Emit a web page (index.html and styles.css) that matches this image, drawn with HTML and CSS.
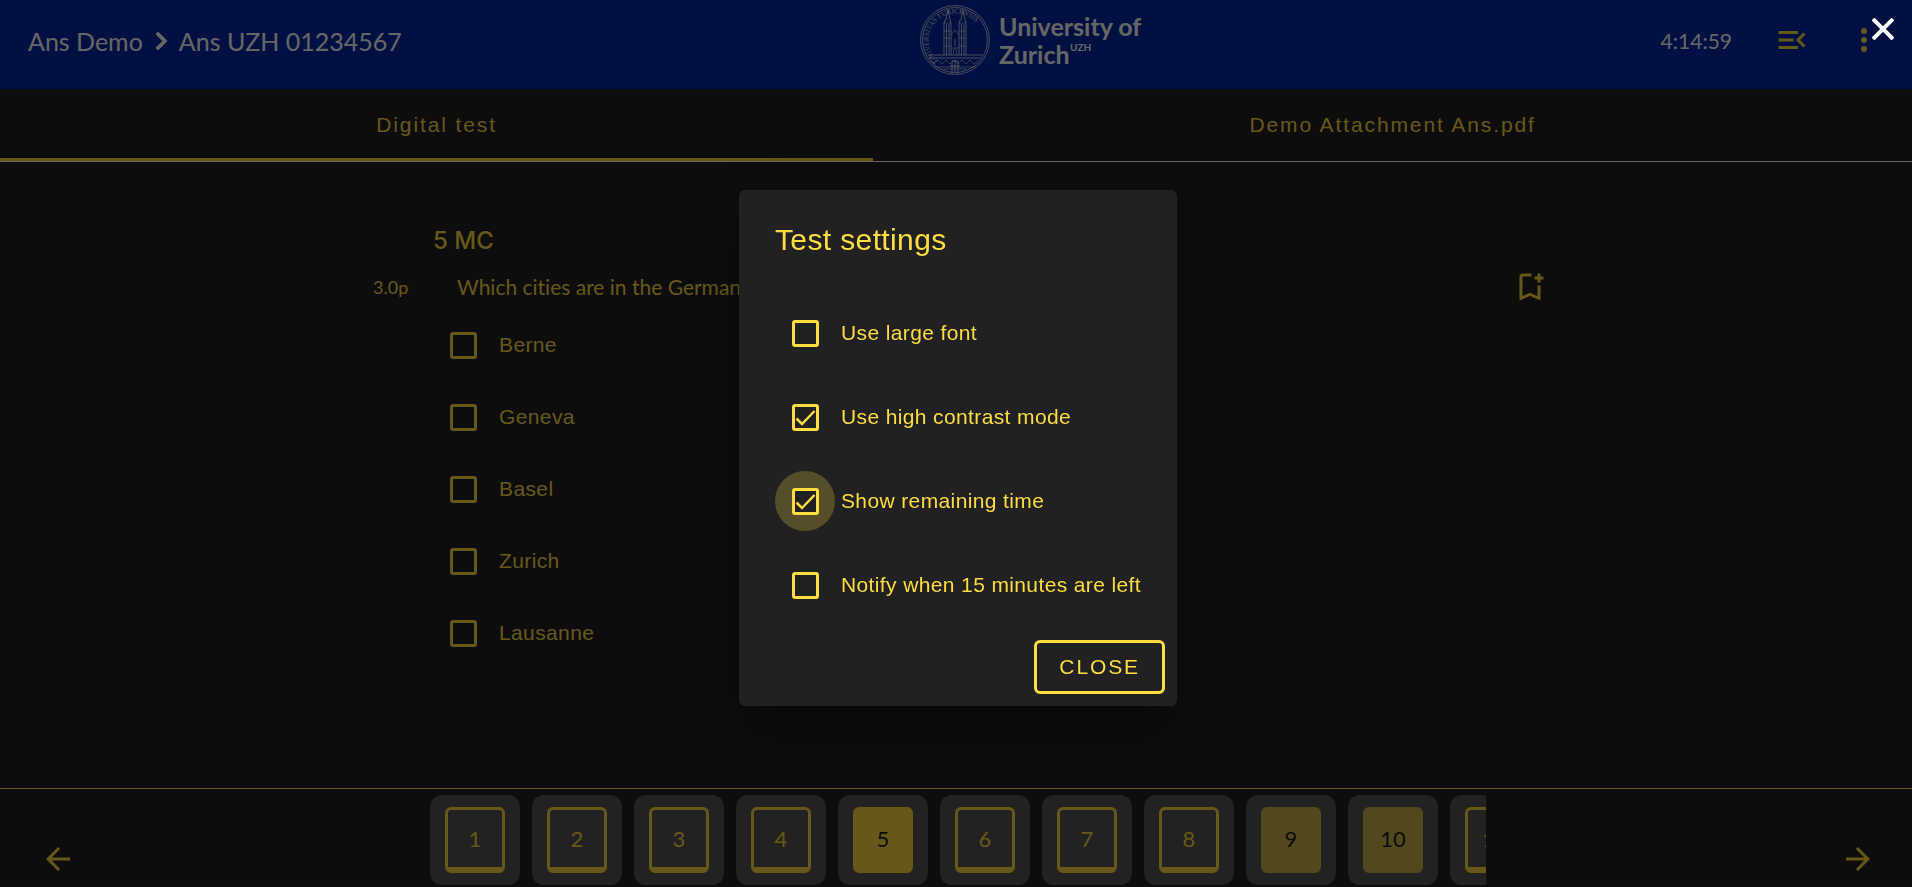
FILE: index.html
```html
<!DOCTYPE html>
<html lang="en">
<head>
<meta charset="utf-8">
<title>Ans UZH 01234567</title>
<link rel="stylesheet" href="styles.css">
</head>
<body>
<div class="page">
  <header class="topbar">
    <nav class="crumbs" aria-label="Breadcrumb">
      <a href="#">Ans Demo</a>
      <svg class="icon crumb-sep" viewBox="0 0 24 24" aria-hidden="true"><path d="M10 6L8.590 7.410 13.170 12l-4.580 4.590L10 18l6-6z"/></svg>
      <a href="#">Ans UZH 01234567</a>
    </nav>
    <div class="topbar-main">
      <svg class="logo" viewBox="0 0 232 80" role="img" aria-label="University of Zurich">
        <defs><path id="ring" d="M19.500 60.500A27 27 0 1 1 55.500 60.500"/></defs>
        <g class="seal">
          <circle cx="37" cy="40" r="34.500"/>
          <circle cx="37" cy="40" r="32.500"/>
          <path d="M10 55H64M11 58H63"/>
          <path class="fine" d="M12 60l4 4 4-4 4 4 4-4 4 4 4-4 4 4 4-4 4 4 4-4 4 4 4-4M16 67H58M25 69H49"/>
          <path d="M26 55V23l1-3h1l1-6 1-4 1 4 1 6 1 3V55M41 55V23l1-3h1l1-6 1-4 1 4 1 6 1 3V55M28.500 55V24M31 55V24M43.500 55V24M46 55V24"/>
          <path class="fine" d="M26 23h7M26 31h7M26 38h7M26 46h7M41 23h7M41 31h7M41 38h7M41 46h7M33 35l4-5 4 5M33 48h8M35.500 55V50q1.500-3 3 0V55"/>
          <path d="M37 39v7M34 74V61h6V74M37 60v13M32 66h10"/>
        </g>
        <text class="seal-text"><textPath href="#ring">UNIVERSITAS TURICENSIS</textPath></text>
        <text class="logo-text" x="81" y="36">University of</text>
        <text class="logo-text" x="81" y="64">Zurich</text>
        <text class="logo-sup" x="152" y="51">UZH</text>
      </svg>
      <div class="tools">
        <time class="timer">4:14:59</time>
        <button class="icon-btn" type="button" aria-label="Open menu"><svg class="icon" viewBox="0 0 24 24"><path d="M3 18h13v-2H3v2zm0-5h10v-2H3v2zm0-7v2h13V6H3zm18 9.590L17.420 12 21 8.410 19.590 7l-5 5 5 5L21 15.590z"/></svg></button>
        <button class="icon-btn" type="button" aria-label="More options"><svg class="icon" viewBox="0 0 24 24"><circle cx="12" cy="6" r="2"/><circle cx="12" cy="12" r="2"/><circle cx="12" cy="18" r="2"/></svg></button>
      </div>
    </div>
  </header>

  <div class="tabs" role="tablist">
    <button class="tab tab-active" type="button" role="tab" aria-selected="true">Digital test</button>
    <button class="tab" type="button" role="tab" aria-selected="false">Demo Attachment Ans.pdf</button>
  </div>

  <main class="question">
    <h1 class="question-title">5 MC</h1>
    <div class="question-row">
      <span class="points">3.0p</span>
      <p class="question-text">Which cities are in the German part of Switzerland?</p>
      <button class="icon-btn" type="button" aria-label="Bookmark question"><svg class="icon" viewBox="0 0 24 24"><path d="M17 11v6.970l-5-2.140-5 2.140V5h6V3H7c-1.100 0-2 .9-2 2v16l7-3 7 3V11h-2zm4-4h-2v2h-2V7h-2V5h2V3h2v2h2v2z"/></svg></button>
    </div>
    <div class="answers">
      <label class="answer"><input class="check" type="checkbox">Berne</label>
      <label class="answer"><input class="check" type="checkbox">Geneva</label>
      <label class="answer"><input class="check" type="checkbox">Basel</label>
      <label class="answer"><input class="check" type="checkbox">Zurich</label>
      <label class="answer"><input class="check" type="checkbox">Lausanne</label>
    </div>
  </main>

  <footer class="pager">
    <button class="icon-btn pager-arrow" type="button" aria-label="Previous"><svg class="icon" viewBox="0 0 24 24"><path d="M20 11H7.830l5.590-5.590L12 4l-8 8 8 8 1.410-1.410L7.830 13H20v-2z"/></svg></button>
    <div class="tiles">
      <button class="tile" type="button"><span class="num">1</span></button>
      <button class="tile" type="button"><span class="num">2</span></button>
      <button class="tile" type="button"><span class="num">3</span></button>
      <button class="tile" type="button"><span class="num">4</span></button>
      <button class="tile" type="button"><span class="num num-current">5</span></button>
      <button class="tile" type="button"><span class="num">6</span></button>
      <button class="tile" type="button"><span class="num">7</span></button>
      <button class="tile" type="button"><span class="num">8</span></button>
      <button class="tile" type="button"><span class="num num-done">9</span></button>
      <button class="tile" type="button"><span class="num num-done">10</span></button>
      <button class="tile" type="button"><span class="num">11</span></button>
    </div>
    <button class="icon-btn pager-arrow" type="button" aria-label="Next"><svg class="icon" viewBox="0 0 24 24"><path d="M4 11h12.170l-5.590-5.590L12 4l8 8-8 8-1.410-1.410L16.170 13H4v-2z"/></svg></button>
  </footer>
</div>

<div class="overlay">
  <section class="dialog" role="dialog" aria-modal="true" aria-labelledby="dialog-title">
    <h2 class="dialog-title" id="dialog-title">Test settings</h2>
    <label class="setting"><span class="ripple"><input class="check" type="checkbox"></span>Use large font</label>
    <label class="setting"><span class="ripple"><input class="check" type="checkbox" checked></span>Use high contrast mode</label>
    <label class="setting"><span class="ripple ripple-on"><input class="check" type="checkbox" checked></span>Show remaining time</label>
    <label class="setting"><span class="ripple"><input class="check" type="checkbox"></span>Notify when 15 minutes are left</label>
    <div class="dialog-actions"><button class="close-btn" type="button">CLOSE</button></div>
  </section>
  <button class="dismiss" type="button" aria-label="Close"><svg viewBox="0 0 22 22"><path d="M1 1L21 21M21 1L1 21"/></svg></button>
</div>
</body>
</html>
```
FILE: styles.css
```css
:root {
  --yellow: #ffdd40;
  --surface: #212121;
  --body-font: Lato, "Open Sans", sans-serif;
  --ui-font: "Liberation Sans", Arial, sans-serif;
}

* { box-sizing: border-box; }

body {
  margin: 0;
  overflow: hidden;
  background: var(--surface);
  color: var(--yellow);
  font-family: var(--ui-font);
  font-size: 21px;
}

button {
  margin: 0;
  padding: 0;
  border: 0;
  background: none;
  color: inherit;
  font: inherit;
  cursor: pointer;
}

.page {
  display: flex;
  flex-direction: column;
  height: 100vh;
}

.icon {
  display: block;
  width: 36px;
  height: 36px;
  fill: currentColor;
}

/* Top bar */
.topbar {
  display: grid;
  grid-template-columns: 12fr 13fr;
  align-items: center;
  flex: none;
  height: 89px;
  background: #0028a5;
  font-family: var(--body-font);
}

.crumbs {
  display: flex;
  align-items: center;
  padding: 0 0 8px 28px;
  color: #fff;
  font-size: 25px;
}

.crumbs a {
  color: inherit;
  text-decoration: none;
}

.crumb-sep {
  stroke: currentColor;
  stroke-width: .6;
}

.topbar-main {
  display: flex;
  justify-content: space-between;
  padding-bottom: 9px;
}

.logo {
  width: 232px;
  height: 80px;
}

.seal {
  fill: none;
  stroke: #fff;
  stroke-opacity: .7;
}

.seal .fine { stroke-opacity: .5; }

.seal-text {
  fill: #fff;
  fill-opacity: .8;
  font: 7px "Liberation Serif", serif;
}

.logo-text {
  fill: #fff;
  font: bold 25px Lato, sans-serif;
}

.logo-sup {
  fill: #fff;
  font: bold 10px Lato, sans-serif;
}

.tools {
  display: flex;
  align-items: center;
  padding-right: 30px;
}

.timer {
  color: #fff;
  font-size: 21px;
  margin-right: 42px;
}

.tools .icon-btn + .icon-btn { margin-left: 36px; }

/* Tabs */
.tabs {
  display: flex;
  flex: none;
  height: 73px;
  border-bottom: 1px solid #fff;
}

.tab {
  flex: 1 0 auto;
  padding-top: 3px;
  border-bottom: 3px solid transparent;
  letter-spacing: .09em;
}

.tab-active { border-bottom-color: var(--yellow); }

/* Question */
.question {
  flex: 1;
  width: 1184px;
  max-width: 100%;
  margin: 0 auto;
  padding: 61px 0 0 9px;
}

.question-title {
  margin: 0 0 10px 60px;
  font: 500 24px/36px Inter, sans-serif;
}

.question-row {
  display: flex;
  align-items: center;
  font-family: var(--body-font);
}

.points {
  width: 84px;
  font-size: 18px;
}

.question-text {
  flex: 1;
  margin: 0;
  padding-bottom: 2px;
  font-variant-ligatures: none;
}

.answers { padding: 4px 0 0 77px; }

.answer {
  display: flex;
  align-items: center;
  gap: 22px;
  height: 72px;
  letter-spacing: .018em;
}

/* Checkbox */
.check {
  display: block;
  flex: none;
  appearance: none;
  width: 27px;
  height: 27px;
  margin: 0;
  border: 3px solid var(--yellow);
  border-radius: 3px;
  background: var(--surface);
}

.check:checked {
  background: var(--surface) url('data:image/svg+xml,<svg xmlns="http://www.w3.org/2000/svg" viewBox="0 0 21 21"><path d="M1.500 11.500L7 17L19.500 4" fill="none" stroke="%23ffdd40" stroke-width="2.500"/></svg>') center / 21px 21px no-repeat;
}

/* Question pager */
.pager {
  display: flex;
  justify-content: space-between;
  flex: none;
  height: 99px;
  padding: 6px 36px 0 40px;
  border-top: 1px solid var(--yellow);
}

.pager-arrow { padding-top: 36px; }

.tiles {
  display: flex;
  gap: 12px;
  width: 1056px;
  overflow: hidden;
}

.tile {
  flex: none;
  width: 90px;
  height: 90px;
  padding: 12px 15px;
  border-radius: 12px;
  background: #555;
}

.num {
  display: grid;
  place-items: center;
  height: 66px;
  border: 3px solid var(--yellow);
  border-bottom-width: 6px;
  border-radius: 6px;
  font-family: var(--body-font);
  font-size: 22px;
}

.num-current {
  background: var(--yellow);
  color: var(--surface);
}

.num-done {
  border-color: #cbb44c;
  background: #cbb44c;
  color: var(--surface);
}

/* Settings dialog */
.overlay {
  position: fixed;
  inset: 0;
  display: grid;
  place-items: center;
  padding: 9px 0 0 4px;
  background: rgba(0, 0, 0, .6);
}

.dialog {
  padding: 0 36px;
  border-radius: 6px;
  background: var(--surface);
  box-shadow: 0 16px 22px -10px rgba(0, 0, 0, .2), 0 36px 57px 4px rgba(0, 0, 0, .14), 0 13px 69px 12px rgba(0, 0, 0, .12);
}

.dialog-title {
  margin: 0;
  padding: 32px 0 33px;
  font-size: 30px;
  font-weight: 400;
  line-height: 36px;
  letter-spacing: .0125em;
}

.setting {
  display: flex;
  align-items: center;
  gap: 6px;
  height: 84px;
  letter-spacing: .018em;
}

.ripple {
  display: grid;
  place-items: center;
  width: 60px;
  height: 60px;
  padding-left: 1px;
  border-radius: 50%;
}

.ripple-on { background: rgba(255, 221, 64, .24); }

.dialog-actions {
  display: flex;
  justify-content: flex-end;
  margin: 0 -24px;
  padding: 13px 0 12px;
}

.close-btn {
  height: 54px;
  padding: 0 22px;
  border: 3px solid var(--yellow);
  border-radius: 6px;
  letter-spacing: .09em;
}

.dismiss {
  position: absolute;
  top: 18px;
  right: 18px;
}

.dismiss svg {
  display: block;
  width: 22px;
  height: 22px;
  fill: none;
  stroke: #fff;
  stroke-width: 4;
}
```
